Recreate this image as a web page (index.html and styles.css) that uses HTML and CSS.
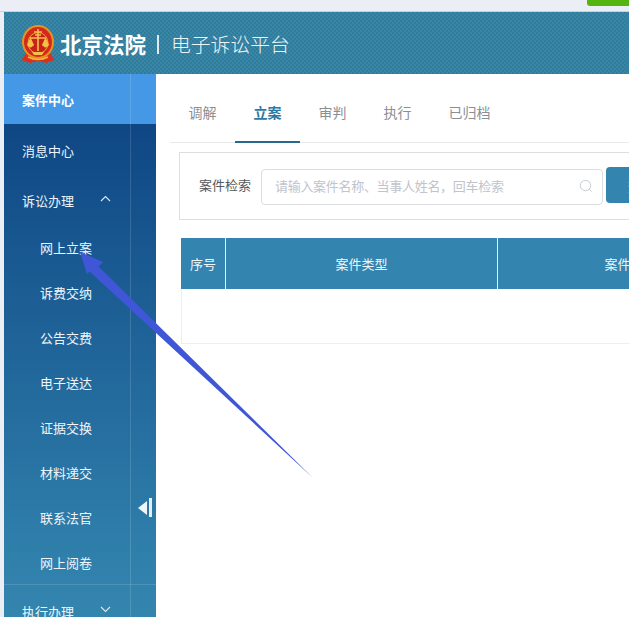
FILE: index.html
```html
<!DOCTYPE html>
<html lang="zh-CN">
<head>
<meta charset="utf-8">
<title>北京法院电子诉讼平台</title>
<link rel="stylesheet" href="styles.css">
</head>
<body>
<div class="topstrip"><span class="green-btn"></span></div>
<div class="app">
  <header class="header">
    <svg class="emblem" width="34" height="39" viewBox="0 0 34 39">
      <path d="M5 28 L0.5 35 L9 38 Q17 34.5 25 38 L33.5 35 L29 28 Z" fill="#d8321e"/>
      <ellipse cx="17" cy="17" rx="16" ry="17" fill="#e8931f"/>
      <ellipse cx="17" cy="17" rx="14" ry="15" fill="#d42a1c"/>
      <ellipse cx="17" cy="18" rx="10" ry="10.5" fill="#c92219" stroke="#efa531" stroke-width="1"/>
      <path d="M17 4 V26 M13 7 H21 M14 10 H20 M8.5 13 H25.5" stroke="#f4c04a" stroke-width="1.6" fill="none"/>
      <path d="M6.5 20 Q9.5 24 12.5 20 L9.5 13.5 Z M21.5 20 Q24.5 24 27.5 20 L24.5 13.5 Z" fill="#f4c04a" stroke="#f4c04a"/>
      <path d="M11 27 H23 L21 30 H13 Z" fill="#f4c04a"/>
      <path d="M7 32 Q17 37 27 32" stroke="#f4b53f" stroke-width="1.6" fill="none"/>
    </svg>
    <span class="brand">北京法院</span>
    <span class="brand-sep"></span>
    <span class="brand-sub">电子诉讼平台</span>
  </header>
  <div class="body">
    <nav class="sidebar">
      <a class="nav-item active">案件中心</a>
      <a class="nav-item">消息中心</a>
      <a class="nav-item">诉讼办理
        <svg class="chev" width="11" height="7" viewBox="0 0 11 7"><path d="M1 6 L5.5 1.5 L10 6" fill="none" stroke="#dfeaf2" stroke-width="1.1"/></svg>
      </a>
      <div class="sub">
        <a class="sub-item">网上立案</a>
        <a class="sub-item">诉费交纳</a>
        <a class="sub-item">公告交费</a>
        <a class="sub-item">电子送达</a>
        <a class="sub-item">证据交换</a>
        <a class="sub-item">材料递交</a>
        <a class="sub-item">联系法官</a>
        <a class="sub-item">网上阅卷</a>
      </div>
      <a class="nav-item">执行办理
        <svg class="chev" width="11" height="7" viewBox="0 0 11 7"><path d="M1 1 L5.5 5.5 L10 1" fill="none" stroke="#dfeaf2" stroke-width="1.1"/></svg>
      </a>
      <span class="collapse"><i class="collapse-tri"></i><i class="collapse-bar"></i></span>
    </nav>
    <main class="main">
      <div class="tabs">
        <a class="tab">调解</a>
        <a class="tab on">立案</a>
        <a class="tab">审判</a>
        <a class="tab">执行</a>
        <a class="tab">已归档</a>
      </div>
      <section class="search">
        <label class="search-label">案件检索</label>
        <div class="search-input">
          <span class="placeholder">请输入案件名称、当事人姓名，回车检索</span>
          <svg class="search-icon" width="14" height="14" viewBox="0 0 14 14"><circle cx="6.5" cy="6.5" r="5.2" fill="none" stroke="#c8ccd3" stroke-width="1"/><path d="M10.2 10.2 L12.6 12.6" stroke="#c8ccd3" stroke-width="1"/></svg>
        </div>
        <button class="search-btn">查询</button>
      </section>
      <div class="table">
        <div class="thead">
          <div class="th th-no">序号</div>
          <div class="th th-type">案件类型</div>
          <div class="th th-name">案件名称</div>
        </div>
        <div class="tbody"></div>
      </div>
    </main>
  </div>
</div>
<svg class="annot" width="629" height="617" viewBox="0 0 629 617">
  <path d="M80 252 L103 262 L98.5 266.5 L313 478 L89.5 271.5 L87 274 Z" fill="#3f57d6"/>
</svg>
</body>
</html>
```
FILE: styles.css
```css
* { box-sizing: border-box; }
html, body { margin: 0; height: 100%; }
body {
  width: 629px;
  height: 617px;
  overflow: hidden;
  position: relative;
  background: #eceef6;
  font-family: "Noto Sans CJK SC", "Liberation Sans", sans-serif;
  font-size: 13px;
}
.topstrip { height: 12px; position: relative; border-bottom: 1px solid #c4d4dd; }
.green-btn {
  position: absolute;
  left: 587px;
  top: -6px;
  width: 60px;
  height: 12px;
  border-radius: 3px;
  background: #55b510;
}
.app { margin-left: 4px; height: 605px; display: flex; flex-direction: column; background: #fff; }
.header {
  height: 62px;
  flex: none;
  display: flex;
  align-items: center;
  padding-left: 17px;
  color: #fff;
  background-color: #33809f;
  background-image: repeating-conic-gradient(#3a86a6 0 25%, #2f7c9c 0 50%);
  background-size: 4px 4px;
}
.emblem { flex: none; margin-top: 3px; }
.brand { margin: 2px 0 0 5px; font-size: 21.5px; font-weight: 700; line-height: 1; }
.brand-sep { width: 2px; height: 19px; margin: 2px 12px 0 11px; background: #dfe9ee; }
.brand-sub { margin-top: 2px; font-size: 19.8px; line-height: 1; font-weight: 300; color: #eef4f7; }
.body { flex: 1; display: flex; min-height: 0; }
.sidebar {
  width: 152px;
  flex: none;
  position: relative;
  overflow: hidden;
  background: linear-gradient(180deg, #0b4080 0%, #2f7fab 88%, #3485ae 100%);
  color: #eef5fa;
}
.sidebar::after {
  content: "";
  position: absolute;
  top: 0;
  bottom: 0;
  left: 126px;
  width: 1px;
  background: rgba(255, 255, 255, .14);
}
.nav-item { display: flex; align-items: center; height: 50px; padding: 2px 0 0 18px; position: relative; }
.nav-item.active { padding-top: 0; background: #4598e6; color: #fff; font-weight: 700; }
.chev { position: absolute; left: 96px; top: 21px; }
.sub-item { display: flex; align-items: center; height: 45px; padding-left: 36px; }
.sub { height: 361px; padding-top: 1px; border-bottom: 1px solid rgba(255, 255, 255, .14); }
.collapse { position: absolute; left: 134px; top: 424px; display: flex; align-items: center; gap: 2px; z-index: 1; }
.collapse-tri { width: 0; height: 0; border: 7px solid transparent; border-left-width: 0; border-right: 9px solid #f1f5f8; }
.collapse-bar { width: 3px; height: 19px; background: #e6eef3; }
.main { flex: 1; min-width: 0; overflow: hidden; background: #fff; padding-left: 14px; }
.tabs { display: flex; height: 69px; border-bottom: 1px solid #e8eaec; margin-right: -40px; color: #8b8f95; font-size: 14px; }
.tab { display: flex; align-items: center; width: 65px; height: 69px; padding: 6px 0 0 18.5px; white-space: nowrap; flex: none; }
.tab.on { color: #2c7aa3; font-weight: 700; border-bottom: 2px solid #26688f; padding-top: 8px; }
.search {
  display: flex;
  align-items: center;
  width: 560px;
  height: 68px;
  margin: 9px 0 0 9px;
  border: 1px solid #dcdee2;
  padding-left: 19px;
}
.search-label { color: #55585c; white-space: nowrap; width: 62px; margin-top: -3px; }
.search-input {
  width: 342px;
  height: 36px;
  display: flex;
  align-items: center;
  justify-content: space-between;
  padding: 0 9px 3px 13px;
  border: 1px solid #dcdee2;
  border-radius: 4px;
  flex: none;
  margin-top: 2px;
}
.placeholder { color: #c0c4cc; white-space: nowrap; letter-spacing: -.3px; }
.search-btn {
  margin: -2px 0 0 3px;
  width: 70px;
  height: 36px;
  border: 0;
  border-radius: 4px;
  background: #3484b0;
  color: #fff;
  font: inherit;
  flex: none;
}
.table { width: 582px; margin: 18px 0 0 11px; border-bottom: 1px solid #eceef1; }
.thead { display: flex; height: 51px; background: #3484b0; color: #eef6fa; }
.th { display: flex; align-items: center; justify-content: center; border-right: 1px solid #e7f0f5; flex: none; padding-bottom: 1px; }
.th-no { width: 45px; }
.th-type { width: 272px; }
.th-name { width: 265px; border-right: 0; }
.tbody { height: 54px; border-left: 1px solid #eceef1; }
.annot { position: absolute; left: 0; top: 0; pointer-events: none; }
```
